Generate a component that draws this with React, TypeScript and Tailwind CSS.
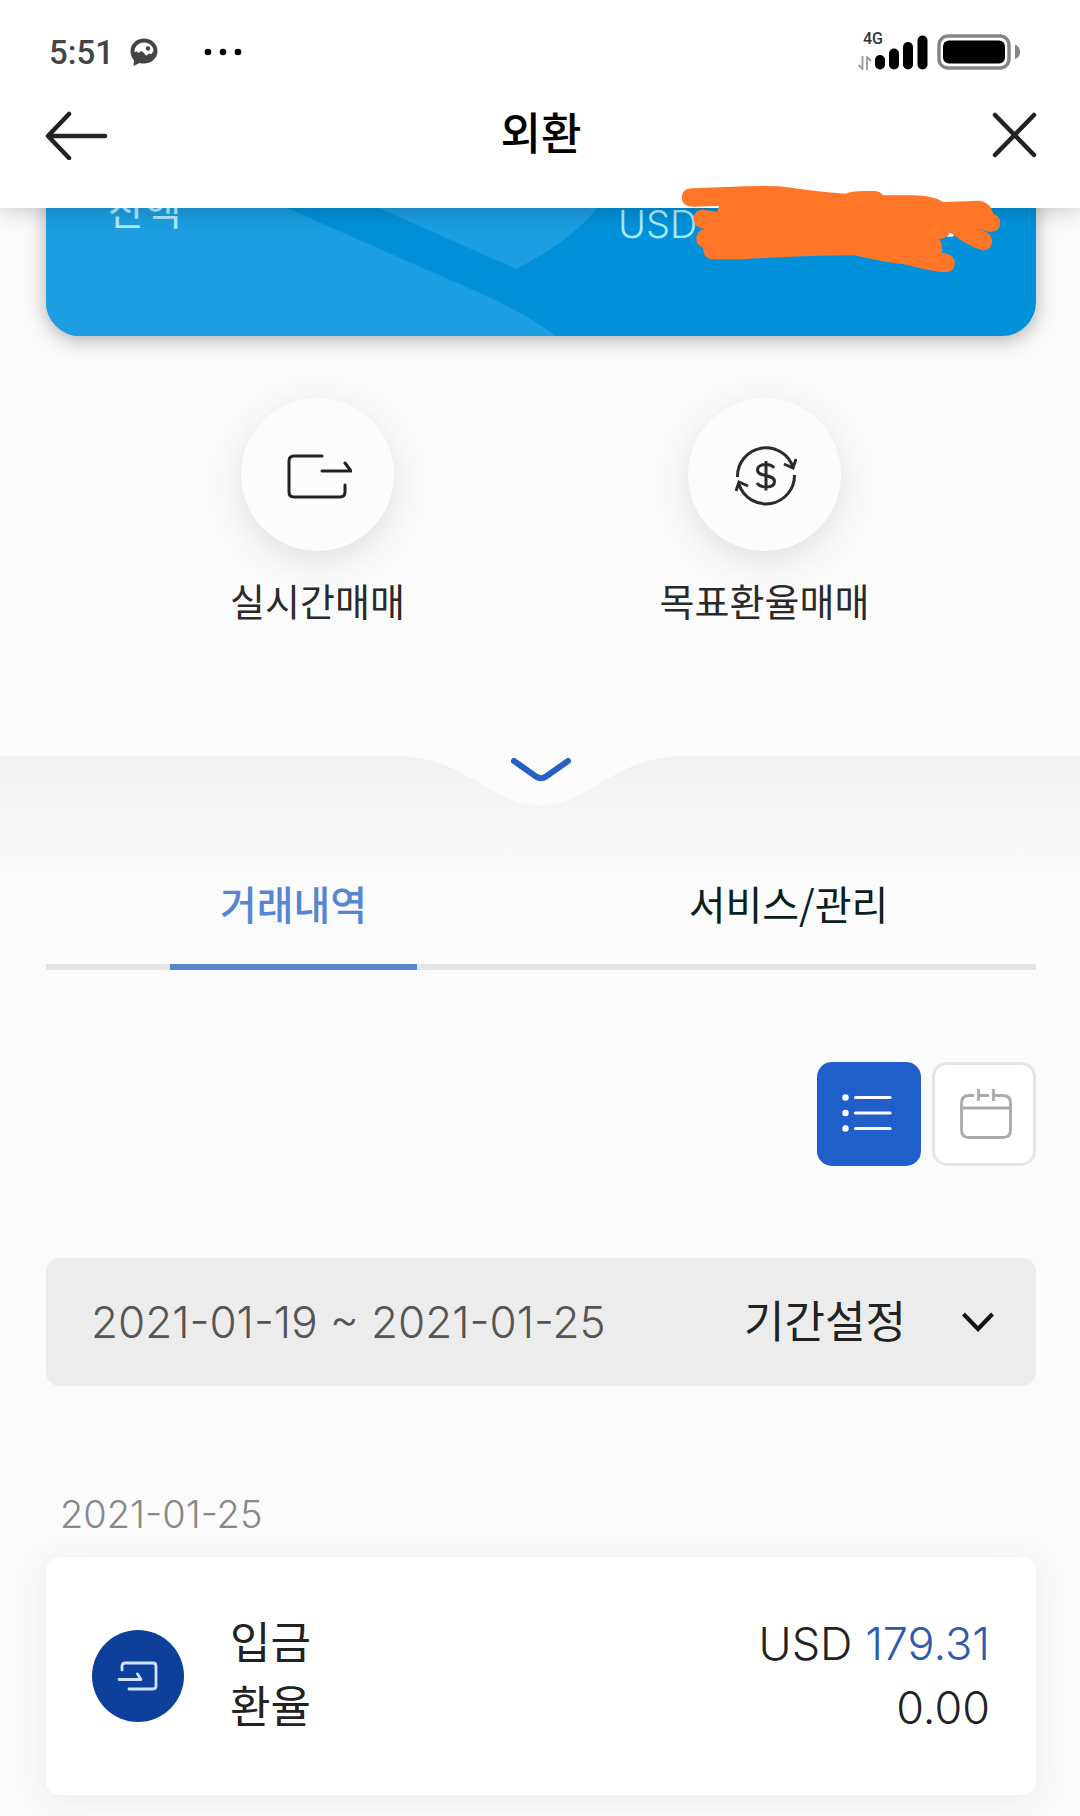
import type { ReactNode } from "react";

const KR = "font-['Noto_Sans_CJK_KR',sans-serif]";
const NUM = "font-['Inter','Noto_Sans_CJK_KR',sans-serif]";

function StatusBar() {
  return (
    <div className="flex h-[56px] items-center justify-between pl-[49px] pr-[59px]">
      <div className="flex items-center">
        <span className="pt-[2px] font-['Roboto',sans-serif] text-[33px] font-medium leading-[40px] text-[#444]">5:51</span>
        <svg className="ml-[16px]" width="28" height="28" viewBox="0 0 28 28" aria-hidden="true">
          <path d="M14 0.5C6.500.5.5 6 .5 13c0 4 1.400 7 3.500 9.500L3.500 28l6-3c1.500.5 3 .6 4.500.6 7.500 0 13.500-5.600 13.500-12.600S21.500.5 14 .5Z" fill="#444" />
          <path d="M4.500 14C4.500 8.500 8.500 4.600 14 4.600c5.500 0 9.300 3.700 9.500 8.400l-2 3-3-.3-2.200 2-2.800-3.200-2.500-1.500-2.500 2-1.500-1.500Z" fill="#fff" />
          <circle cx="18" cy="10.500" r="2.200" fill="#444" />
        </svg>
        <svg className="ml-[46px]" width="40" height="8" viewBox="0 0 40 8" aria-hidden="true">
          <circle cx="4" cy="4" r="3.300" />
          <circle cx="19" cy="4" r="3.300" />
          <circle cx="34" cy="4" r="3.300" />
        </svg>
      </div>
      <div className="flex items-end pb-[5px]">
        <div className="flex flex-col items-end">
          <span className="font-['Roboto',sans-serif] text-[16px] font-medium leading-[20px] text-[#333]">4G</span>
          <svg className="mr-[11px] mt-[7px]" width="14" height="14" viewBox="0 0 14 14" fill="none" stroke="#999" strokeWidth="1.800" aria-hidden="true">
            <path d="M4.500 0V13L.5 9M9 14V1L13 5" />
          </svg>
        </div>
        <svg className="-ml-[8px]" width="54" height="35" viewBox="0 0 54 35" aria-hidden="true">
          <rect x="0" y="20" width="10" height="14.500" rx="5" />
          <rect x="14" y="13.500" width="10" height="21" rx="5" />
          <rect x="28" y="7" width="10" height="27.500" rx="5" />
          <rect x="42.500" y="0.500" width="10" height="34" rx="5" />
        </svg>
        <svg className="ml-[8px]" width="84" height="36" viewBox="0 0 84 36" aria-hidden="true">
          <rect x="2" y="2" width="70" height="32" rx="9" fill="none" stroke="#858585" strokeWidth="3.500" />
          <rect x="6" y="6.500" width="62" height="23" rx="6" />
          <path d="M78 10.500C82 12 83 15 83 18s-1 5.500-5 7Z" fill="#858585" />
        </svg>
      </div>
    </div>
  );
}

function Header() {
  return (
    <header className="relative z-10 bg-white pb-[18px] pt-[24px] shadow-[0_4px_20px_rgba(0,0,0,0.18)]">
      <StatusBar />
      <div className="flex h-[110px] items-center justify-between pl-[44px] pr-[42px]">
        <button type="button" aria-label="뒤로">
          <svg width="64" height="50" viewBox="0 0 64 50" fill="none" stroke="#222" strokeWidth="4.500" strokeLinecap="round" strokeLinejoin="round">
            <path d="M25 4L4 26L25 48M4 26H61" />
          </svg>
        </button>
        <h1 className={`${KR} pb-[8px] text-[44px] font-medium leading-[64px] text-black`}>외환</h1>
        <button type="button" aria-label="닫기" className="flex w-[64px] justify-end">
          <svg width="46" height="46" viewBox="0 0 46 46" fill="none" stroke="#222" strokeWidth="4.500" strokeLinecap="round">
            <path d="M3 3L42 43M42 3L3 43" />
          </svg>
        </button>
      </div>
    </header>
  );
}

function BalanceCard() {
  return (
    <section className="relative -mt-[40px] pl-[46px] pr-[44px]">
      <div className="relative flex h-[168px] justify-between overflow-hidden rounded-b-[34px] bg-[#0091da] px-[62px] pt-[12px] shadow-[0_4px_20px_rgba(0,0,0,0.3)]">
        <svg className="absolute left-0 top-0" width="600" height="168" viewBox="0 0 600 168" fill="#1c9ee0" aria-hidden="true">
          <path d="M0 0H150L241 40L445 130Q480 146 510 168H0Z" />
          <path d="M243 0L333 40L470 101Q525 73 551 40Q570 20 580 0Z" />
        </svg>
        <span className={`${KR} relative text-[40px] leading-[56px] text-[#b0eaff]`}>잔액</span>
      </div>
      <span className={`${NUM} absolute left-[618px] top-[28px] text-[38px] font-light leading-[56px] text-[#a9ebff]`}>USD</span>
    </section>
  );
}

function Scribble() {
  return (
    <svg className="absolute left-[681px] top-[185px] z-20" width="320" height="88" viewBox="410 76 930 264" preserveAspectRatio="none" aria-hidden="true">
      <path d="M1180 215L1184 231H1200L1204 224Z" fill="#fff" />
      <path
        fill="#ff7629"
        d="M440 86L600 80Q690 77 720 83Q800 96 888 102Q905 94 940 94H972Q988 94 997 107H1080Q1140 106 1172 127L1278 123Q1308 126 1318 162Q1338 170 1338 190Q1337 216 1308 217L1275 208L1298 218Q1315 228 1314 248Q1310 274 1286 272Q1235 256 1193 218Q1180 240 1160 238Q1172 252 1168 279Q1206 284 1206 309Q1204 340 1176 338Q1130 334 1060 314Q1000 308 915 287Q760 288 585 299L498 299Q474 294 474 264Q454 258 454 236Q456 212 480 208Q446 204 446 176Q450 150 474 150L516 156L520 139L440 141Q412 138 412 112Q414 88 440 86Z"
      />
    </svg>
  );
}

function Action({ label, children }: { label: string; children: ReactNode }) {
  return (
    <button type="button" className="flex flex-col items-center">
      <span className="flex size-[153px] items-center justify-center rounded-full bg-[#fcfcfc] shadow-[0_10px_36px_rgba(0,0,0,0.11)]">
        {children}
      </span>
      <span className={`${KR} mt-[21px] text-[38px] leading-[56px] text-[#2a2a2a]`}>{label}</span>
    </button>
  );
}

function Actions() {
  return (
    <section className="grid grid-cols-2 pb-[128px] pl-[94px] pr-[92px] pt-[62px]">
      <Action label="실시간매매">
        <svg className="ml-[3px] mt-[4px]" width="66" height="48" viewBox="0 0 66 48" fill="none" stroke="#222" strokeWidth="3" strokeLinecap="round" strokeLinejoin="round">
          <path d="M36 3H8Q3 3 3 8V39Q3 44 8 44H54Q59 44 59 39V32" />
          <path d="M36 18H65L59 10" />
        </svg>
      </Action>
      <Action label="목표환율매매">
        <svg className="ml-[3px] mt-[3px]" width="62" height="62" viewBox="0 0 62 62" fill="none" stroke="#2a2a2a" strokeWidth="3">
          <path d="M2.500 32A28.500 28.500 0 0 1 58 22.200M49 19L58 23L61 14" />
          <path d="M59.500 30A28.500 28.500 0 0 1 4 39.500M1 46L4 37L13 41" />
          <path d="M39 23C37 20 34 19.500 31 19.500C26 19.500 22.500 21.500 22.500 25C22.500 32.500 39.500 28.500 39.500 36.500C39.500 40.500 36 42 31 42C27 42 24 41 22 38M31 16V45.500" />
        </svg>
      </Action>
    </section>
  );
}

function PullHandle() {
  return (
    <div className="-mb-[30px] flex h-[120px] justify-center bg-linear-to-b from-[#f1f1f1] to-[#fbfbfb]">
      <button type="button" aria-label="펼치기" className="h-[50px]">
        <svg width="290" height="50" viewBox="0 0 290 50" fill="none">
          <path d="M0 0C72 0 94 49 145 49C196 49 218 0 290 0Z" fill="#fcfcfc" />
          <path d="M119 5L141 20.500Q146 24 151 20.500L173 5" stroke="#2560c4" strokeWidth="6" strokeLinecap="round" />
        </svg>
      </button>
    </div>
  );
}

function Tabs() {
  return (
    <div role="tablist" className="grid grid-cols-2 border-b-[6px] border-[#e5e5e5]">
      <button type="button" role="tab" aria-selected="true" className="relative flex h-[118px] items-center justify-center pb-[4px]">
        <span className={`${KR} text-[40px] font-medium leading-[60px] text-[#5686d2]`}>거래내역</span>
        <span className="absolute -bottom-[6px] left-1/4 h-[6px] w-1/2 bg-[#5686d2]" />
      </button>
      <button type="button" role="tab" aria-selected="false" className="flex h-[118px] items-center justify-center pb-[4px]">
        <span className={`${KR} text-[40px] leading-[60px] text-[#0a2020]`}>서비스/관리</span>
      </button>
    </div>
  );
}

function ViewToggle() {
  return (
    <div className="mt-[92px] flex justify-end gap-[11px]">
      <button type="button" aria-label="목록" className="flex size-[104px] items-center justify-center rounded-[15px] bg-[#205fca] pb-[3px] pr-[4px]">
        <svg width="50" height="38" viewBox="0 0 50 38" fill="#fff" stroke="#fff" strokeLinecap="round">
          <g stroke="none">
            <circle cx="3.500" cy="3.500" r="3.200" />
            <circle cx="3.500" cy="19" r="3.200" />
            <circle cx="3.500" cy="34.500" r="3.200" />
          </g>
          <path d="M13.500 3.500H48M13.500 19H48M13.500 34.500H48" strokeWidth="3.200" />
        </svg>
      </button>
      <button type="button" aria-label="달력" className="flex size-[104px] items-center justify-center rounded-[15px] border-[3px] border-[#e5e5e5] bg-white pl-[3px]">
        <svg width="52" height="50" viewBox="0 0 52 50" fill="none" stroke="#aaa" strokeWidth="2.800">
          <path d="M14 6.500H9Q1.500 6.500 1.500 14V41Q1.500 48.500 9 48.500H43Q50.500 48.500 50.500 41V14Q50.500 6.500 43 6.500H34M18 6.500H29M1.500 19H50.500M18.500 0V12M33.500 0V12" />
        </svg>
      </button>
    </div>
  );
}

function PeriodBar() {
  return (
    <div className="mt-[92px] flex h-[128px] items-center justify-between rounded-[14px] bg-[#ececec] pl-[45px] pr-[41px]">
      <span className={`${NUM} text-[44px] font-light leading-[60px] text-[#555]`}>2021-01-19 ~ 2021-01-25</span>
      <button type="button" className="flex items-center gap-[55px]">
        <span className={`${KR} pb-[6px] text-[44px] leading-[64px] text-[#222]`}>기간설정</span>
        <svg width="34" height="22" viewBox="0 0 34 22" fill="none" stroke="#111" strokeWidth="4">
          <path d="M2.500 3L17 18L31.500 3" />
        </svg>
      </button>
    </div>
  );
}

function Transaction() {
  return (
    <article>
      <h2 className={`${NUM} ml-[14px] mt-[108px] text-[38px] font-light leading-[40px] text-[#888]`}>2021-01-25</h2>
      <div className="mt-[23px] flex h-[238px] items-center rounded-[14px] bg-white pl-[46px] pr-[46px] shadow-[0_6px_36px_rgba(0,0,0,0.07)]">
        <span className="flex size-[92px] shrink-0 items-center justify-center rounded-full bg-[#0d409a]">
          <svg width="42" height="30" viewBox="0 0 42 30" fill="none" stroke="#d3e2ff" strokeWidth="2.800" strokeLinecap="round" strokeLinejoin="round">
            <path d="M5 9V5Q5 2 8 2H36Q39 2 39 5V25Q39 28 36 28H12" />
            <path d="M2 18.500H24L20.500 13" />
          </svg>
        </span>
        <dl className="ml-[46px] flex-1 text-[#222]">
          <div className="flex justify-between">
            <dt className={`${KR} text-[44px] leading-[56px]`}>입금</dt>
            <dd className={`${NUM} text-[45px] font-light leading-[64px]`}>
              USD <span className="text-[#2a5cb0]">179.31</span>
            </dd>
          </div>
          <div className="flex justify-between">
            <dt className={`${KR} text-[44px] leading-[56px]`}>환율</dt>
            <dd className={`${NUM} text-[45px] font-light leading-[64px]`}>0.00</dd>
          </div>
        </dl>
      </div>
    </article>
  );
}

export default function App() {
  return (
    <div className="relative min-h-screen overflow-x-hidden bg-[#fbfbfb] pb-[21px]">
      <Header />
      <BalanceCard />
      <Scribble />
      <Actions />
      <PullHandle />
      <main className="relative pl-[46px] pr-[44px]">
        <Tabs />
        <ViewToggle />
        <PeriodBar />
        <Transaction />
      </main>
    </div>
  );
}
